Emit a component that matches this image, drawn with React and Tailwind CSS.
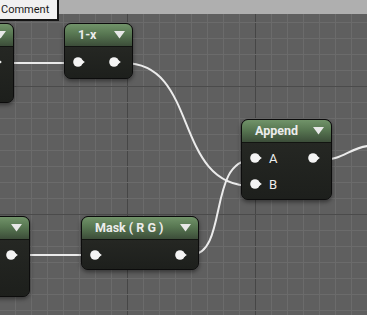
import React from 'react';

const Pin = () => (
  <svg width="12" height="10" viewBox="0 0 12 10" className="block shrink-0">
    <circle cx="5" cy="5" r="4.8" fill="#f4f4f4" />
    <path d="M8.6 2.4 L11.8 5 L8.6 7.6 Z" fill="#f4f4f4" />
  </svg>
);

const Caret = () => (
  <svg width="11" height="8" viewBox="0 0 11 8" className="block shrink-0">
    <path d="M0 0 H11 L5.5 7.5 Z" fill="#e8e8e8" />
  </svg>
);

const Node = ({ title, rows, className }) => (
  <div
    className={`absolute flex flex-col overflow-hidden rounded-[7px] border border-[#0c0c0c] bg-[#1e201d] shadow-[0_2px_4px_rgba(0,0,0,0.45)] ${className}`}
  >
    <div className="flex h-[23px] shrink-0 items-center justify-between border-b border-[#121411] bg-[linear-gradient(180deg,#719369_0%,#587752_45%,#3c4d39_100%)] pl-[13px] pr-[7px]">
      <span className="whitespace-pre text-[12.5px] font-bold leading-none text-[#ececec] [font-family:Roboto,'Liberation_Sans',sans-serif]">
        {title}
      </span>
      <Caret />
    </div>
    <div className="flex flex-1 flex-col bg-[linear-gradient(180deg,#252723_0%,#1d1f1c_100%)] pt-[2px]">
      {rows.map((row, i) => (
        <div key={i} className="flex h-[26px] items-center justify-between pl-[8px] pr-[11px]">
          <div className="flex items-center gap-[7px]">
            {row.left && <Pin />}
            {row.label && (
              <span className="text-[13px] leading-none text-[#ececec] [font-family:Roboto,'Liberation_Sans',sans-serif]">
                {row.label}
              </span>
            )}
          </div>
          {row.right && <Pin />}
        </div>
      ))}
    </div>
  </div>
);

const Grid = () => {
  const v = [];
  const h = [];
  for (let x = 15; x < 367; x += 16) v.push(x);
  for (let y = 6; y < 315; y += 16) h.push(y);
  return (
    <svg width="367" height="315" className="absolute left-0 top-0">
      <rect width="367" height="315" fill="#5f5f5f" />
      {v.map((x) => (
        <rect key={'v' + x} x={x} y="0" width="1" height="315" fill={(x + 1) % 128 === 0 ? '#464646' : '#6b6b6b'} />
      ))}
      {h.map((y) => (
        <rect key={'h' + y} x="0" y={y} width="367" height="1" fill={(y - 86) % 128 === 0 ? '#4b4b4b' : '#6b6b6b'} />
      ))}
    </svg>
  );
};

const Wires = () => (
  <svg width="367" height="315" className="pointer-events-none absolute left-0 top-0">
    <g fill="none" stroke="#ebebeb" strokeWidth="2" strokeLinecap="round">
      <path d="M6 63 L76 63" />
      <path d="M124 63 C200 63 172 186 252 186" />
      <path d="M192 255 C228 252 208 160 252 160" />
      <path d="M16 255 L93 255" />
      <path d="M322 160 C342 160 350 148 368 146" />
    </g>
  </svg>
);

export default function App() {
  return (
    <div className="relative h-[315px] w-[367px] overflow-hidden bg-[#5f5f5f]">
      <Grid />
      <div className="absolute left-0 top-0 h-[14px] w-full bg-[#afafaf]" />
      <Wires />

      <Node className="left-[-40px] top-[23px] h-[80px] w-[54px]" title="" rows={[{ right: true }]} />
      <Node className="left-[64px] top-[23px] h-[56px] w-[69px]" title="1-x" rows={[{ left: true, right: true }]} />
      <Node
        className="left-[241px] top-[119px] h-[81px] w-[91px]"
        title="Append"
        rows={[{ left: true, label: 'A', right: true }, { left: true, label: 'B' }]}
      />
      <Node className="left-[81px] top-[216px] h-[54px] w-[118px]" title="Mask ( R G )" rows={[{ left: true, right: true }]} />
      <Node className="left-[-60px] top-[216px] h-[81px] w-[90px]" title="" rows={[{ right: true }]} />

      <div className="absolute left-0 top-0 flex h-[21px] w-[59px] items-center border-b-2 border-r-2 border-[#141414] bg-[#f1f1f1] pl-[1px]">
        <span className="text-[11px] leading-none text-[#1a1a1a] [font-family:Roboto,'Liberation_Sans',sans-serif]">
          Comment
        </span>
      </div>
    </div>
  );
}
